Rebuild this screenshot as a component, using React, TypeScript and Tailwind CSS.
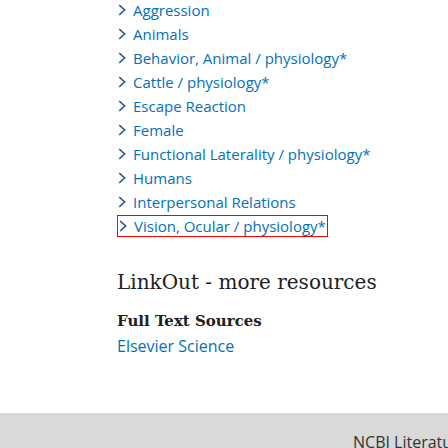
import React from "react";

const items = [
  "Aggression",
  "Animals",
  "Behavior, Animal / physiology*",
  "Cattle / physiology*",
  "Escape Reaction",
  "Female",
  "Functional Laterality / physiology*",
  "Humans",
  "Interpersonal Relations",
];

function Chevron() {
  return (
    <svg width="8" height="12" viewBox="0 0 8 12" className="shrink-0">
      <path d="M1.2 1 L6.6 6 L1.2 11" fill="none" stroke="#205493" strokeWidth="1.6" />
    </svg>
  );
}

export default function App() {
  const sans = { fontFamily: '"Open Sans", "Noto Sans", sans-serif' };
  return (
    <div className="w-[448px] h-[448px] overflow-hidden bg-white flex flex-col">
      <div className="pl-[117px] mt-[-2px]" style={sans}>
        <ul className="flex flex-col">
          {items.map((t) => (
            <li key={t} className="h-[24px] flex items-center pl-[1px] text-[15px] text-[#0071bc]">
              <Chevron />
              <span className="ml-[7px]">{t}</span>
            </li>
          ))}
          <li className="h-[24px] flex items-center">
            <span className="h-[22px] flex items-center pl-[1px] pr-[1px] border border-[#ff0000] text-[15px] text-[#0071bc]">
              <Chevron />
              <span className="ml-[7px]">Vision, Ocular / physiology*</span>
            </span>
          </li>
        </ul>
        <h2
          className="mt-[30px] text-[20px] leading-[28px] text-[#212121]"
          style={{ fontFamily: '"DejaVu Serif", serif' }}
        >
          LinkOut - more resources
        </h2>
        <h3
          className="mt-[14px] text-[15px] leading-[22px] font-bold text-[#212121]"
          style={{ fontFamily: '"DejaVu Serif", serif' }}
        >
          Full Text Sources
        </h3>
        <a className="block mt-[3px] text-[16px] leading-[22px] text-[#0071bc]">Elsevier Science</a>
      </div>
      <div className="mt-auto h-[35px] bg-[#d9d9d9] flex items-start pl-[353px] pt-[19px] overflow-hidden" style={sans}>
        <span className="text-[16px] leading-[20px] text-[#333333] whitespace-nowrap">NCBI Literature Resources</span>
      </div>
    </div>
  );
}
